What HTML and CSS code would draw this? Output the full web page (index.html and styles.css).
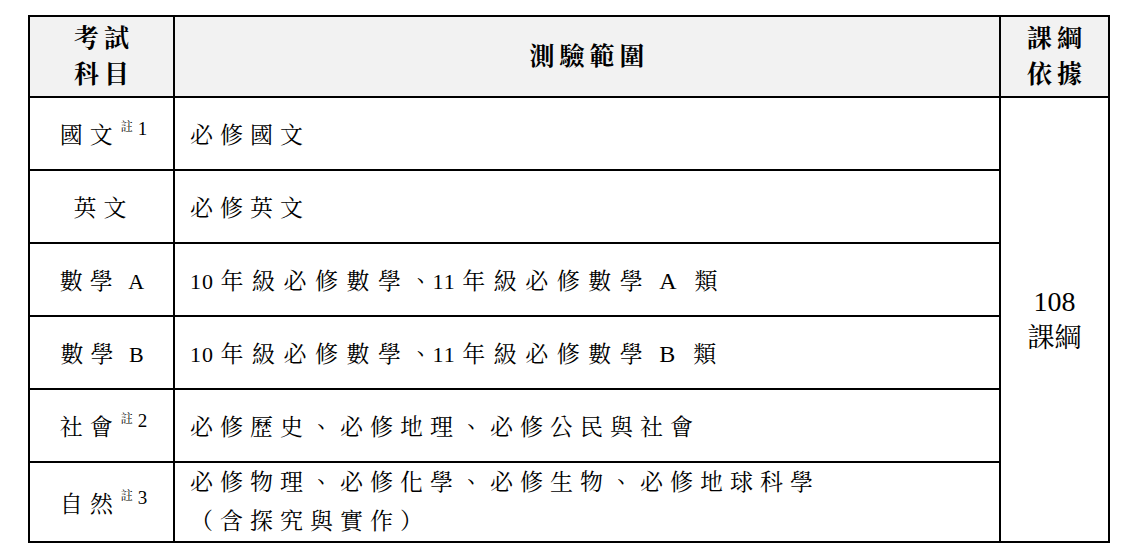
FILE: index.html
```html
<!DOCTYPE html>
<html lang="zh-Hant">
<head>
<meta charset="utf-8">
<link rel="stylesheet" href="styles.css">
</head>
<body>
<table class="scope">
  <colgroup>
    <col class="c-subj">
    <col class="c-range">
    <col class="c-basis">
  </colgroup>
  <thead>
    <tr class="head">
      <th>考試<br>科目</th>
      <th>測驗範圍</th>
      <th>課綱<br>依據</th>
    </tr>
  </thead>
  <tbody>
    <tr>
      <td class="subj"><span class="sp">國</span>文<sup class="note"><span class="nz">註</span>1</sup></td>
      <td class="range">必修國文</td>
      <td class="basis" rowspan="6"><span class="num">108</span><br>課綱</td>
    </tr>
    <tr>
      <td class="subj">英文</td>
      <td class="range">必修英文</td>
    </tr>
    <tr>
      <td class="subj">數學<span class="lat"> A</span></td>
      <td class="range math"><span class="lat">10 </span>年級必修數學<span class="dun">、</span><span class="lat">11 </span>年級必修數學<span class="letter">A</span>類</td>
    </tr>
    <tr>
      <td class="subj">數學<span class="lat"> B</span></td>
      <td class="range math"><span class="lat">10 </span>年級必修數學<span class="dun">、</span><span class="lat">11 </span>年級必修數學<span class="letter">B</span>類</td>
    </tr>
    <tr>
      <td class="subj"><span class="sp">社</span>會<sup class="note"><span class="nz">註</span>2</sup></td>
      <td class="range">必修歷史、必修地理、必修公民與社會</td>
    </tr>
    <tr class="last">
      <td class="subj"><span class="sp">自</span>然<sup class="note"><span class="nz">註</span>3</sup></td>
      <td class="range two">必修物理、必修化學、必修生物、必修地球科學<br>（含探究與實作）</td>
    </tr>
  </tbody>
</table>
</body>
</html>
```
FILE: styles.css
```css
html, body {
  margin: 0;
  padding: 0;
  background: #ffffff;
}
body {
  padding: 15px 0 0 28px;
  font-family: "Liberation Serif", "Noto Serif CJK TC", "Noto Sans CJK TC", serif;
  color: #000;
}
.scope {
  border-collapse: collapse;
  table-layout: fixed;
  width: 1080px;
}
.c-subj { width: 145px; }
.c-range { width: 826px; }
.c-basis { width: 109px; }
.scope th, .scope td {
  border: 2px solid #000;
  padding: 0;
}
.head {
  height: 81px;
}
.head th {
  background: #f2f2f2;
  font-weight: bold;
  font-size: 25px;
  line-height: 36px;
  letter-spacing: 5px;
  padding-left: 5px;
  text-align: center;
  vertical-align: middle;
}
tbody tr {
  height: 73px;
}
tbody tr.last {
  height: 79px;
}
.subj {
  text-align: center;
  font-size: 23px;
  letter-spacing: 7px;
  vertical-align: middle;
  padding-left: 4px !important;
}
.subj .sp + * {
  letter-spacing: 0;
}
.range {
  font-size: 23px;
  letter-spacing: 7px;
  padding-left: 15px !important;
  vertical-align: middle;
}
.range.math {
  letter-spacing: 8.5px;
}
.lat {
  font-size: 22px;
  letter-spacing: 1px;
}
.letter {
  font-size: 24px;
  letter-spacing: 0;
  padding: 0 18px 0 8px;
}
.subj .lat {
  letter-spacing: 3px;
}
.dun {
  letter-spacing: 0;
}
.range.two {
  line-height: 39px;
}
.basis {
  text-align: center;
  vertical-align: middle;
  font-size: 27px;
  line-height: 36px;
}
.num {
  font-size: 28px;
}
.note {
  font-size: 19px;
  letter-spacing: 0;
  vertical-align: 8px;
  line-height: 0;
  margin-left: 1px;
}
.nz {
  font-size: 12px;
  margin-right: 5px;
  vertical-align: 4px;
}
```
